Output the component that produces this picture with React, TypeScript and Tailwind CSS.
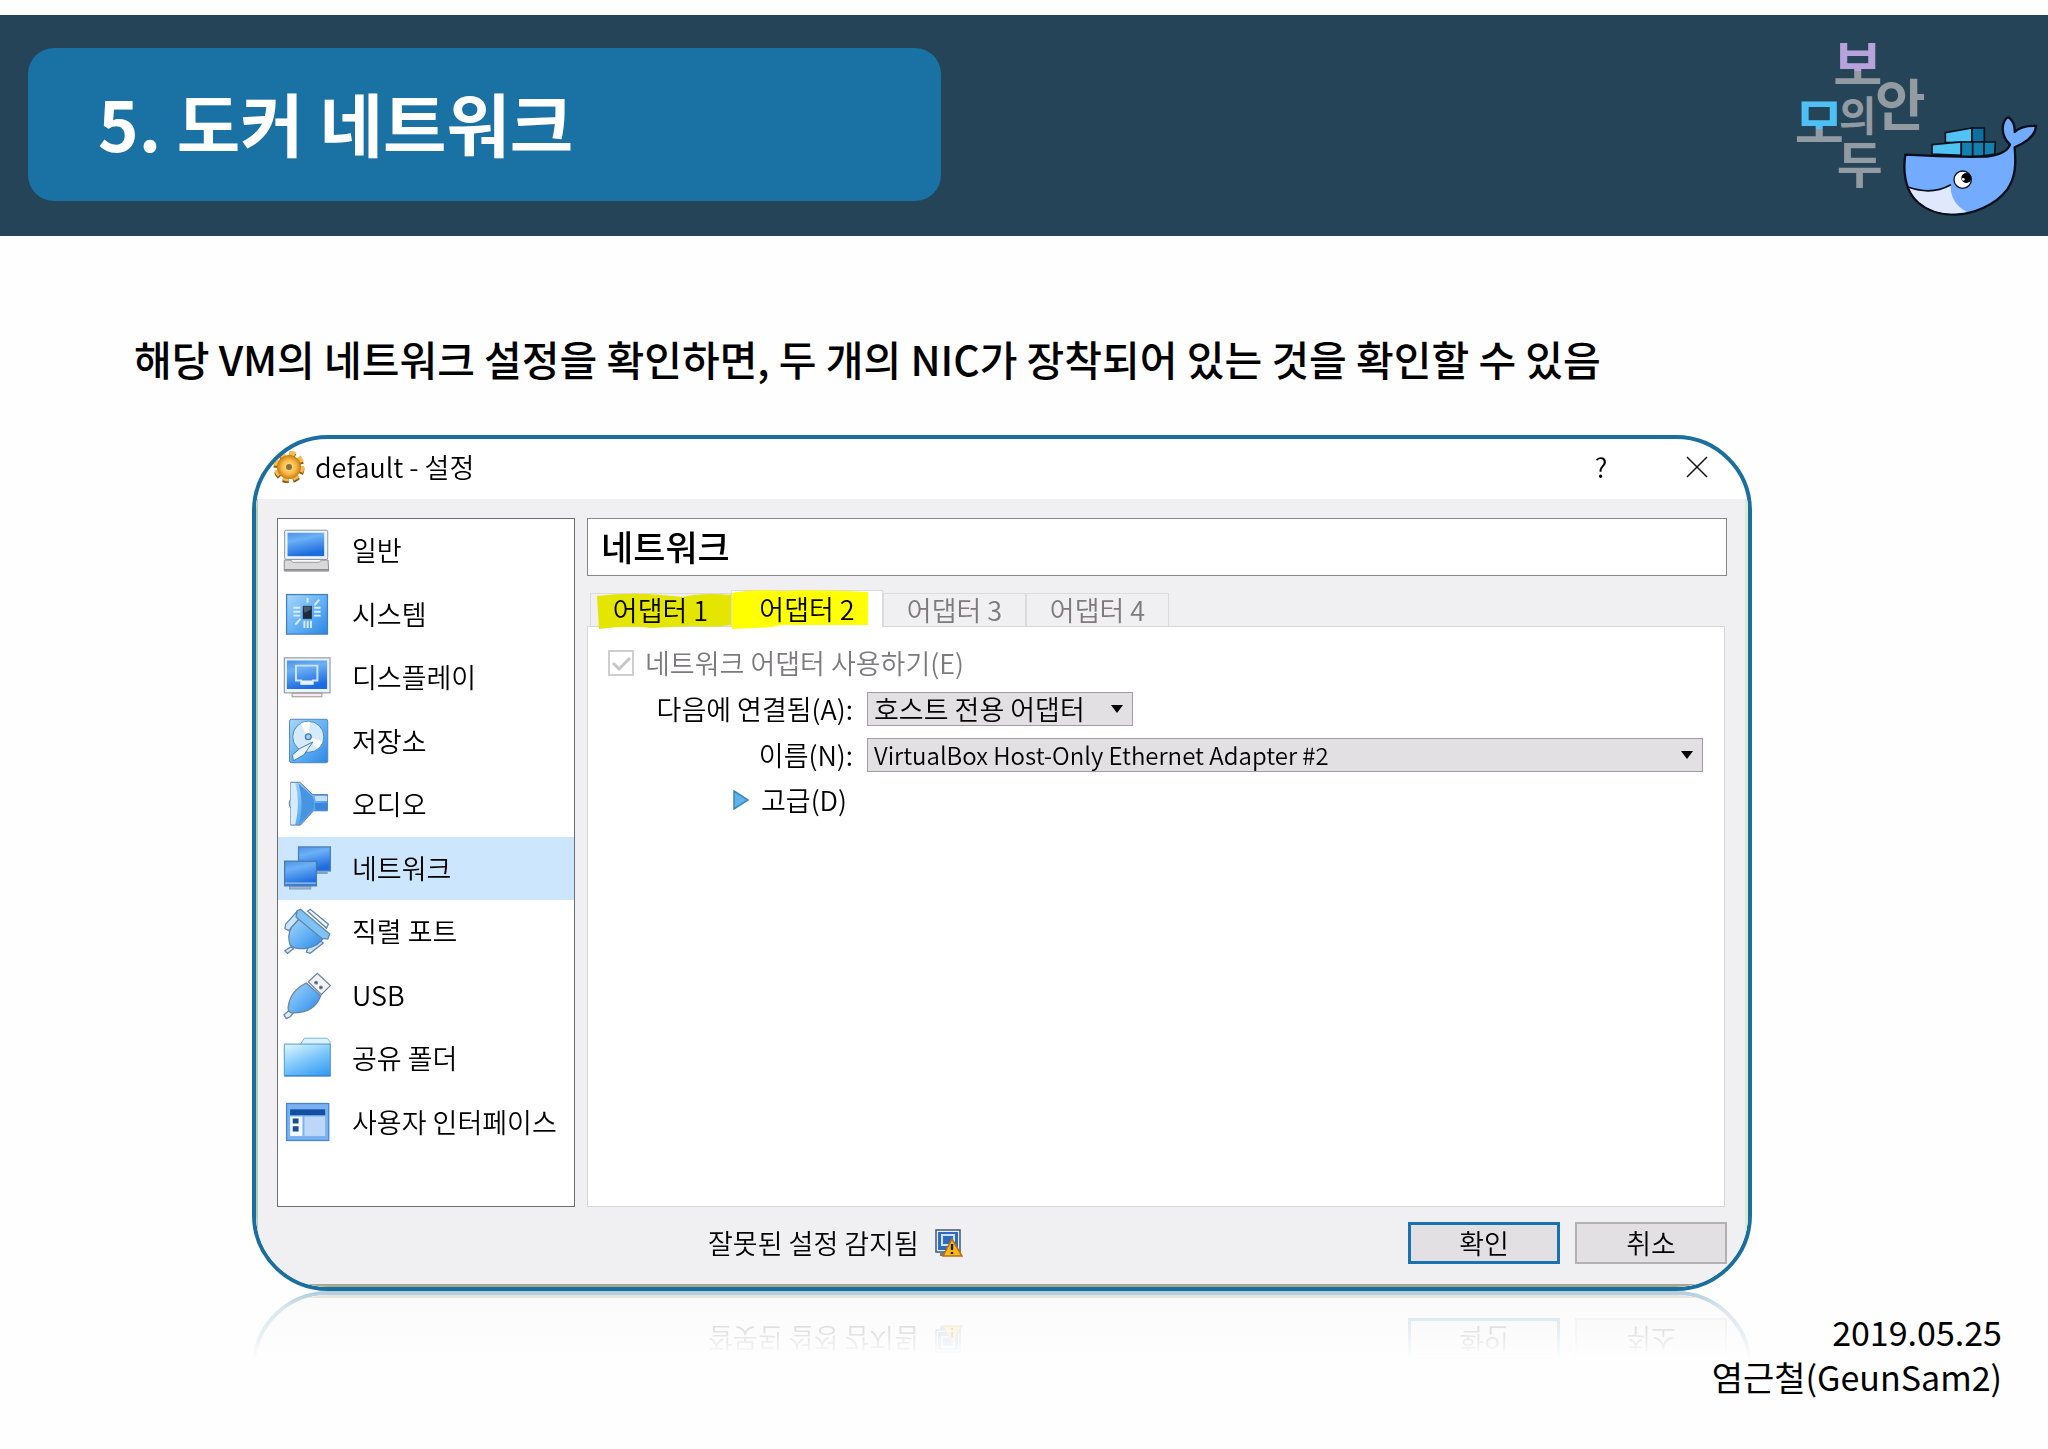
import React, { useState } from 'react';

const ICON_STROKE = '#5b7ea8';

const MENU = [
  { id: 'general',   label: '일반' },
  { id: 'system',    label: '시스템' },
  { id: 'display',   label: '디스플레이' },
  { id: 'storage',   label: '저장소' },
  { id: 'audio',     label: '오디오' },
  { id: 'network',   label: '네트워크' },
  { id: 'serial',    label: '직렬 포트' },
  { id: 'usb',       label: 'USB' },
  { id: 'folder',    label: '공유 폴더' },
  { id: 'interface', label: '사용자 인터페이스' },
];

const TABS = [
  { label: '어댑터 1', size: 'w-[141px] h-[33px]', mark: 'M6 2Q40 -2 70 1L92 3Q110 -2 141 1V31Q120 34 100 32L60 34Q40 31 8 35Z', color: '#e4e600' },
  { label: '어댑터 2', size: 'w-[152px] h-[37px] -mb-px', mark: 'M0 2Q20 -2 50 0Q80 -2 136 1V34H60Q50 33 40 36L0 38Z', color: '#ffff00' },
  { label: '어댑터 3', size: 'w-[143px] h-[33px]' },
  { label: '어댑터 4', size: 'w-[143px] h-[33px]' },
];

/* ── Iconos del menú lateral ─────────────────────────────── */
const MenuIcon: React.FC<{ id: string }> = ({ id }) => (
  <svg viewBox="0 0 148 138" className="w-12 h-[46px] shrink-0 overflow-visible" aria-hidden="true">
    {id === 'general' && (
      <>
        <rect x="5" y="8" width="133" height="90" rx="5" fill="#eef3fa" stroke="#8795a8" strokeWidth="3" />
        <rect x="14" y="16" width="113" height="72" fill="url(#blue)" />
        <path d="M4 100H139L141 134H4Z" fill="#d9d9dc" stroke="#8c8c90" strokeWidth="3" />
        <path d="M24 100L30 107H112L118 100" fill="#f8f8f8" stroke="#9a9a9e" strokeWidth="3" />
        <path d="M5 130H140" stroke="#77777b" strokeWidth="4" />
      </>
    )}
    {id === 'system' && (
      <>
        <rect x="11" y="9" width="126" height="122" fill="url(#sky)" stroke="#4280c8" strokeWidth="4" />
        <g stroke="#d9ecff" strokeWidth="6">
          <path d="M32 50H53M32 62H53M32 74H53M96 50H116M96 62H116M96 74H116M76 20V34M97 42L112 25M54 84L38 102M66 90V112M76 90V112M86 90V112" />
        </g>
        <rect x="61" y="44" width="28" height="40" fill="#1d2b3c" />
        <path d="M63 46H86V54L66 66Z" fill="#4c5b6c" />
      </>
    )}
    {id === 'display' && (
      <>
        <rect x="4" y="10" width="141" height="108" fill="#eef3fa" stroke="#7689a3" strokeWidth="3" />
        <rect x="12" y="18" width="124" height="88" fill="url(#blue)" />
        <path d="M40 34H106V80H92V90H56V80H40Z" fill="none" stroke="#cfe4fb" strokeWidth="6" />
        <path d="M56 80H92V92H56Z" fill="#e6f1fc" />
        <path d="M28 119H120V130H28Z" fill="#f1eded" stroke="#a08d8d" strokeWidth="3" />
      </>
    )}
    {id === 'storage' && (
      <>
        <rect x="20" y="2" width="118" height="134" rx="6" fill="url(#sky)" stroke="#4d86bd" strokeWidth="3" />
        <circle cx="78" cy="56" r="48" fill="#d5eafa" stroke="#4d86bd" strokeWidth="3" />
        <path d="M78 56L54 16A46 46 0 0 1 84 10ZM78 56L122 70A46 46 0 0 1 104 94Z" fill="#ffffff" />
        <circle cx="78" cy="56" r="9" fill="#a7cdee" stroke="#3f7cb8" strokeWidth="4" />
        <path d="M92 72L64 112L32 130L29 112L52 92Z" fill="#eaf5fd" stroke="#3f7cb8" strokeWidth="3" />
      </>
    )}
    {id === 'audio' && (
      <>
        <path d="M24 2H52L92 40H137V90H94L54 134H24V82Q14 66 24 54Z" fill="url(#sky)" stroke={ICON_STROKE} strokeWidth="3" />
        <path d="M24 4H38Q54 66 38 132H24Z" fill="#d8ecfc" />
        <path d="M48 6L90 44Q102 66 92 88L50 130Q66 66 48 6Z" fill="#4795e0" />
        <path d="M98 44H136V60H100Z" fill="#c4e0f9" />
        <path d="M98 66H136V88H100Z" fill="#3788dc" />
      </>
    )}
    {id === 'network' && (
      <>
        <rect x="48" y="4" width="98" height="74" fill="url(#blue)" stroke="#4d7fb8" strokeWidth="4" />
        <path d="M68 84H138" stroke="#7fa2c8" strokeWidth="7" />
        <rect x="5" y="48" width="98" height="76" fill="url(#blue)" stroke="#4b79ad" strokeWidth="4" />
        <path d="M7 116H101" stroke="#7fb1e6" strokeWidth="6" />
        <path d="M20 126H86V134H20Z" fill="#9db8d4" stroke="#6685a8" strokeWidth="2" />
      </>
    )}
    {id === 'serial' && (
      <g stroke="#5f87ab" strokeWidth="4">
        <path d="M76 8L84 2L140 48L134 60Z" fill="#f6fafe" />
        <path d="M24 118L6 130L14 138L32 124Z" fill="#dbeefc" />
        <path d="M44 8L8 48L6 62L18 68L54 26Z" fill="#c8e5fb" />
        <path d="M112 96L76 122L72 134L84 138L124 106Z" fill="#c8e5fb" />
        <path d="M50 32L124 92Q108 116 76 122Q40 128 22 112Q12 84 26 58Z" fill="url(#sky)" />
        <path d="M44 6L54 2L144 78L138 94L120 92L40 26Z" fill="#7fc3f6" />
      </g>
    )}
    {id === 'usb' && (
      <g stroke="#6a85a2" strokeWidth="4">
        <path d="M78 28L106 2L146 40L118 68Z" fill="#f4f4f5" />
        <circle cx="102" cy="31" r="4" fill="#333" />
        <circle cx="117" cy="46" r="4" fill="#333" />
        <path d="M24 112L3 130L10 142L22 136L34 122Z" fill="#dceefc" />
        <path d="M72 32L116 72Q96 126 26 124Q14 120 16 106Q22 56 72 32Z" fill="url(#sky)" />
      </g>
    )}
    {id === 'folder' && (
      <>
        <path d="M54 26L66 8H136L145 18V40H54Z" fill="#d9f3fc" stroke="#79b4cf" strokeWidth="3" />
        <path d="M4 26H146V124H4Z" fill="url(#fold)" stroke="#4f97cf" strokeWidth="3" />
        <path d="M4 124H147" stroke="#2f7fd0" strokeWidth="4" />
      </>
    )}
    {id === 'interface' && (
      <>
        <rect x="11" y="12" width="130" height="114" fill="#79b1f3" stroke="#4a86cf" strokeWidth="4" />
        <rect x="22" y="30" width="108" height="18" fill="#134f9f" />
        <rect x="22" y="52" width="38" height="60" fill="#f4f9ff" />
        <rect x="66" y="52" width="64" height="60" fill="#bdd7fb" />
        <path d="M30 58H48V74H30ZM30 82H48V98H30Z" fill="#1c4b8f" />
      </>
    )}
  </svg>
);

const SharedGradients: React.FC = () => (
  <svg className="absolute w-0 h-0" aria-hidden="true">
    <defs>
      <linearGradient id="blue" x1="0" y1="0" x2="0.3" y2="1">
        <stop offset="0" stopColor="#4a93ea" />
        <stop offset="0.35" stopColor="#6cb0f6" />
        <stop offset="1" stopColor="#1c6cdf" />
      </linearGradient>
      <linearGradient id="sky" x1="0" y1="0" x2="1" y2="1">
        <stop offset="0" stopColor="#a8d6fb" />
        <stop offset="0.6" stopColor="#5aabf4" />
        <stop offset="1" stopColor="#2d86e0" />
      </linearGradient>
      <linearGradient id="fold" x1="0.2" y1="0" x2="0.8" y2="1">
        <stop offset="0" stopColor="#d4f1fe" />
        <stop offset="0.5" stopColor="#7cc6fa" />
        <stop offset="1" stopColor="#379df3" />
      </linearGradient>
      <radialGradient id="gold">
        <stop offset="0" stopColor="#ffe9a0" />
        <stop offset="0.6" stopColor="#f6b840" />
        <stop offset="1" stopColor="#c97a12" />
      </radialGradient>
    </defs>
  </svg>
);

const Logo: React.FC = () => (
  <svg viewBox="90 0 756 600" className="w-[252px] h-[200px] mt-[5px]" role="img" aria-label="모두의 보안">
    <defs>
      <linearGradient id="bo" gradientUnits="userSpaceOnUse" x1="0" y1="60" x2="0" y2="200">
        <stop offset="0.66" stopColor="#b8a2dc" />
        <stop offset="0.66" stopColor="#929aa2" />
      </linearGradient>
      <linearGradient id="mo" gradientUnits="userSpaceOnUse" x1="0" y1="240" x2="0" y2="380">
        <stop offset="0.62" stopColor="#4fc0f5" />
        <stop offset="0.62" stopColor="#929aa2" />
      </linearGradient>
    </defs>
    <g fontFamily="'Noto Sans CJK KR', sans-serif" fontWeight="700" fill="#929aa2">
      <text x="220" y="194" fontSize="160" fill="url(#bo)">보</text>
      <text x="345" y="316" fontSize="165">안</text>
      <text x="237" y="332" fontSize="122">의</text>
      <text x="104" y="369" fontSize="160" fill="url(#mo)">모</text>
      <text x="230" y="489" fontSize="150">두</text>
    </g>

    {/* Ballena */}
    <g stroke="#0a0f1a" strokeWidth="7" strokeLinejoin="round" strokeLinecap="round">
      <path d="M436 404Q560 412 680 410Q740 402 750 374Q722 346 730 312Q736 292 746 292Q766 306 764 336Q786 316 828 318Q826 356 764 382C768 430 768 470 742 508C706 556 640 582 584 584C510 584 462 550 444 504C430 466 432 430 436 404Z" fill="#72abff" />
      <path d="M448 504Q520 522 572 496Q570 548 620 576Q530 592 478 546Q458 528 448 504Z" fill="#dfe8fd" stroke="none" />
      <path d="M446 502Q516 526 571 495" fill="none" strokeWidth="5" />
      <path d="M556 338L636 324V366L556 368Z" fill="#4fc4f4" strokeWidth="5" />
      <path d="M636 324H673V366H636Z" fill="#0d6f9f" strokeWidth="5" />
      <path d="M516 374L604 366V406L516 402Z" fill="#4fc4f4" strokeWidth="5" />
      <path d="M604 366H706L704 402Q660 412 604 408Z" fill="#1480b0" strokeWidth="5" />
      <path d="M638 366V408M672 366V408" strokeWidth="5" />
      <circle cx="608" cy="479" r="26" fill="#fff" strokeWidth="4" />
      <circle cx="619" cy="474" r="15" fill="#000" stroke="none" />
      <circle cx="610" cy="478" r="4" fill="#fff" stroke="none" />
    </g>
  </svg>
);

const GearIcon: React.FC = () => (
  <svg viewBox="0 0 32 32" className="w-8 h-8" aria-hidden="true">
    <circle cx="16" cy="17" r="13" fill="none" stroke="#8a5a18" strokeWidth="5" strokeDasharray="6 4.2" />
    <circle cx="16" cy="15" r="13" fill="none" stroke="#f4bc50" strokeWidth="5" strokeDasharray="6 4.2" />
    <circle cx="16" cy="16" r="12" fill="url(#gold)" />
    <circle cx="16" cy="16" r="3" fill="#8a7040" />
  </svg>
);

const WarningIcon: React.FC = () => (
  <svg viewBox="0 0 28 28" className="w-7 h-7" aria-hidden="true">
    <rect x="1" y="1" width="24" height="22" fill="#e8f0fa" stroke="#3d5878" strokeWidth="1.5" />
    <rect x="3" y="3" width="20" height="18" fill="#2f6cc0" />
    <path d="M7 6H19V16H7Z" fill="none" stroke="#cfe2f8" strokeWidth="2" />
    <path d="M5 24H12V27H5Z" fill="#6f7c8c" />
    <path d="M17 10L27 27H8Z" fill="#f9b820" stroke="#b8700c" strokeWidth="1.5" />
    <path d="M17 15V21M17 23V25" stroke="#2a1a00" strokeWidth="2.4" />
  </svg>
);

interface ComboProps { id: string; size: string; options: string[] }

const Combo: React.FC<ComboProps> = ({ id, size, options }) => (
  <div className={`relative ${size}`}>
    <select
      id={id}
      className="appearance-none block w-full h-[34px] pl-[6px] pr-9 bg-[#e2e0e3] border border-[#a09ea1] leading-8 text-black"
    >
      {options.map(o => <option key={o}>{o}</option>)}
    </select>
    <svg viewBox="0 0 12 8" className="absolute right-[10px] top-[13px] w-3 h-2 pointer-events-none" aria-hidden="true">
      <path d="M0 0H12L6 8Z" fill="#000" />
    </svg>
  </div>
);

const SettingsDialog: React.FC = () => {
  const [section, setSection] = useState('network');
  const [tab, setTab] = useState(1);

  return (
    <section
      className="rounded-[76px] overflow-hidden border-4 border-[#1a6f9f] bg-white font-[350] text-[27px] leading-8 text-black [-webkit-box-reflect:below_0px_linear-gradient(to_top,rgba(0,0,0,0.35),rgba(0,0,0,0.16)_2%,rgba(0,0,0,0.1)_5%,transparent_8%)]"
    >
      {/* ── Title bar ─────────────────────────────────────────── */}
      <div className="h-[60px] flex items-center pl-[17px] pr-[35px] pb-1">
        <GearIcon />
        <h2 className="flex-1 pl-[10px]">default - 설정</h2>
        <button className="w-8 mr-[64px]" aria-label="도움말">?</button>
        <button className="w-8 flex justify-center" aria-label="닫기">
          <svg viewBox="0 0 22 22" className="w-[22px] h-[22px]"><path d="M1 1L21 21M21 1L1 21" stroke="#111" strokeWidth="1.5" /></svg>
        </button>
      </div>

      <div className="bg-[#f0eff1] border-l-2 border-l-[#b4cbb8] border-r-[3px] border-r-[#dcebd0] border-b-[3px] border-b-[#a8a890] pt-[19px] pl-[19px] pr-[18px] pb-5">
        <div className="flex gap-3">
          {/* ── Sidebar ─────────────────────────────────────────── */}
          <nav className="w-[298px] shrink-0 min-h-[689px] bg-white border border-[#6e6e70]">
            <ul className="grid grid-rows-10 h-[635px]">
              {MENU.map(m => (
                <li key={m.id} className="flex">
                  <button
                    onClick={() => setSection(m.id)}
                    className={`flex-1 flex items-center gap-[21px] pl-[5px] pb-px text-left whitespace-nowrap ${section === m.id ? 'bg-[#cce6fd]' : ''}`}
                  >
                    <MenuIcon id={m.id} />
                    {m.label}
                  </button>
                </li>
              ))}
            </ul>
          </nav>

          <div className="flex-1 flex flex-col">
            <h3 className="h-[58px] mb-[14px] px-[13px] pb-[2px] flex items-center bg-white border border-[#8a888b] text-[35px] font-medium">네트워크</h3>

            {/* ── Tabs ──────────────────────────────────────────── */}
            <div role="tablist" className="h-9 pl-[3px] flex items-end">
              {TABS.map((t, i) => (
                <button
                  key={t.label}
                  role="tab"
                  aria-selected={tab === i}
                  onClick={() => setTab(i)}
                  className={`relative border border-b-0 border-[#dcdadd] ${t.size} ${tab === i ? 'bg-white' : ''} ${i > 1 ? 'text-[#7c7a7d]' : ''}`}
                >
                  {t.mark && (
                    <svg className="absolute left-0 top-0 w-full h-full overflow-visible" aria-hidden="true">
                      <path d={t.mark} fill={t.color} />
                    </svg>
                  )}
                  <span className="relative">{t.label}</span>
                </button>
              ))}
            </div>

            <div className="flex-1 mr-[2px] bg-white border border-[#d8d6d9] pt-[23px] pl-5 pr-[21px]">
              <div className="flex items-center gap-[11px] h-[26px] text-[#7c7a7d]">
                <span className="grid w-[26px] h-[26px]">
                  <input id="enable" type="checkbox" defaultChecked disabled className="[grid-area:1/1] appearance-none border-2 border-[#cfcdd0] bg-white" />
                  <svg viewBox="0 0 26 26" className="[grid-area:1/1] pointer-events-none" aria-hidden="true">
                    <path d="M5 13L11 19L22 8" fill="none" stroke="#c8c6c9" strokeWidth="3" />
                  </svg>
                </span>
                <label htmlFor="enable">네트워크 어댑터 사용하기(E)</label>
              </div>

              <div className="mt-4 grid grid-cols-[245px_1fr] gap-x-[14px] gap-y-3 items-center">
                <label htmlFor="attached" className="text-right whitespace-nowrap">다음에 연결됨(A):</label>
                <Combo id="attached" size="w-[266px]" options={['호스트 전용 어댑터', 'NAT', '브리지']} />
                <label htmlFor="name" className="text-right">이름(N):</label>
                <Combo id="name" size="w-full text-[24px]" options={['VirtualBox Host-Only Ethernet Adapter #2']} />
                <button className="justify-self-end flex items-center gap-3 mr-[6px]">
                  <svg viewBox="0 0 16 20" className="w-4 h-5" aria-hidden="true">
                    <path d="M1 1L15 10L1 19Z" fill="#5ab4ee" stroke="#3f87bd" strokeWidth="1.5" />
                  </svg>
                  고급(D)
                </button>
              </div>
            </div>
          </div>
        </div>

        {/* ── Footer ──────────────────────────────────────────── */}
        <div className="mt-[15px] flex items-center">
          <p className="flex-1 flex items-center gap-4 pl-[431px]">
            잘못된 설정 감지됨
            <WarningIcon />
          </p>
          <button className="w-[152px] h-[42px] mr-[15px] bg-[#e2e0e3] border-[3px] border-[#1a72b0]">확인</button>
          <button className="w-[152px] h-[42px] bg-[#e2e0e3] border-2 border-[#b3b1b4]">취소</button>
        </div>
      </div>
    </section>
  );
};

const App: React.FC = () => (
  <div className="min-h-screen bg-[#fefefe] pt-[15px] font-['Noto_Sans_CJK_KR','Noto_Sans',sans-serif] text-black">
    <SharedGradients />

    <header className="h-[221px] pl-7 pr-[6px] flex items-start justify-between bg-[#264458]">
      <div className="w-[913px] h-[153px] mt-[33px] pl-[70px] pb-1 flex items-center rounded-[26px] bg-[#1a71a3]">
        <h1 className="text-[69px] leading-none font-bold text-white">5. 도커 네트워크</h1>
      </div>
      <Logo />
    </header>

    <main className="pl-[252px] pr-[296px]">
      <p className="-ml-[118px] mt-[94px] mb-[49px] text-[41px] leading-[56px] font-medium whitespace-nowrap">
        해당 VM의 네트워크 설정을 확인하면, 두 개의 NIC가 장착되어 있는 것을 확인할 수 있음
      </p>
      <SettingsDialog />
    </main>

    <footer className="mt-[18px] pr-[46px] text-right text-[34px] leading-[45px]">
      <p>2019.05.25</p>
      <p>염근철(GeunSam2)</p>
    </footer>
  </div>
);

export default App;
